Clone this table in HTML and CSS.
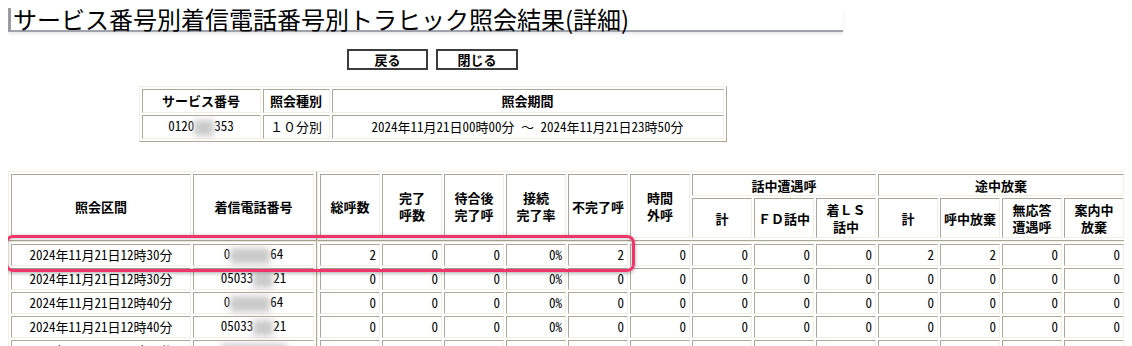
FILE: index.html
```html
<!DOCTYPE html>
<html lang="ja">
<head>
<meta charset="utf-8">
<title>サービス番号別着信電話番号別トラヒック照会結果(詳細)</title>
<link rel="stylesheet" href="styles.css">
</head>
<body>
<div class="page">
  <h1 class="title">サービス番号別着信電話番号別トラヒック照会結果(詳細)</h1>

  <div class="actions">
    <button class="btn btn-back" type="button">戻る</button>
    <button class="btn btn-close" type="button">閉じる</button>
  </div>

  <table class="grid summary">
    <tr class="summary-head">
      <th class="c-svc">サービス番号</th>
      <th class="c-kind">照会種別</th>
      <th class="c-period">照会期間</th>
    </tr>
    <tr class="summary-row">
      <td>0120<span class="mask mask-s"></span>353</td>
      <td>１０分別</td>
      <td>2024年11月21日00時00分&nbsp;～&nbsp;2024年11月21日23時50分</td>
    </tr>
  </table>

  <div class="report">
    <div class="report-part">
      <table class="grid fixed-head">
        <tr>
          <th class="c-range">照会区間</th>
          <th class="c-tel">着信電話番号</th>
        </tr>
      </table>
      <table class="grid stat-head">
        <tr class="r1">
          <th rowspan="2">総呼数</th>
          <th rowspan="2">完了<br>呼数</th>
          <th rowspan="2">待合後<br>完了呼</th>
          <th rowspan="2">接続<br>完了率</th>
          <th rowspan="2">不完了呼</th>
          <th rowspan="2">時間<br>外呼</th>
          <th class="grp" colspan="3">話中遭遇呼</th>
          <th class="grp" colspan="4">途中放棄</th>
          <th rowspan="2">応答<br>遅延呼</th>
        </tr>
        <tr class="r2">
          <th>計</th>
          <th>ＦＤ話中</th>
          <th>着ＬＳ<br>話中</th>
          <th>計</th>
          <th>呼中放棄</th>
          <th>無応答<br>遭遇呼</th>
          <th>案内中<br>放棄</th>
        </tr>
      </table>
    </div>

    <div class="report-part">
      <table class="grid fixed-body">
        <tr><td class="c-range">2024年11月21日12時30分</td><td class="c-tel">0<span class="mask mask-m"></span>64</td></tr>
        <tr><td class="c-range">2024年11月21日12時30分</td><td class="c-tel">05033<span class="mask mask-s"></span>21</td></tr>
        <tr><td class="c-range">2024年11月21日12時40分</td><td class="c-tel">0<span class="mask mask-m"></span>64</td></tr>
        <tr><td class="c-range">2024年11月21日12時40分</td><td class="c-tel">05033<span class="mask mask-s"></span>21</td></tr>
        <tr><td class="c-range">2024年11月21日12時50分</td><td class="c-tel"><span class="mask mask-l"></span></td></tr>
      </table>
      <table class="grid stat-body">
        <tr><td>2</td><td>0</td><td>0</td><td>0%</td><td>2</td><td>0</td><td>0</td><td>0</td><td>0</td><td>2</td><td>2</td><td>0</td><td>0</td><td>0</td></tr>
        <tr><td>0</td><td>0</td><td>0</td><td>0%</td><td>0</td><td>0</td><td>0</td><td>0</td><td>0</td><td>0</td><td>0</td><td>0</td><td>0</td><td>0</td></tr>
        <tr><td>0</td><td>0</td><td>0</td><td>0%</td><td>0</td><td>0</td><td>0</td><td>0</td><td>0</td><td>0</td><td>0</td><td>0</td><td>0</td><td>0</td></tr>
        <tr><td>0</td><td>0</td><td>0</td><td>0%</td><td>0</td><td>0</td><td>0</td><td>0</td><td>0</td><td>0</td><td>0</td><td>0</td><td>0</td><td>0</td></tr>
        <tr><td>0</td><td>0</td><td>0</td><td>0%</td><td>0</td><td>0</td><td>0</td><td>0</td><td>0</td><td>0</td><td>0</td><td>0</td><td>0</td><td>0</td></tr>
      </table>
    </div>

    <div class="callout"></div>
  </div>
</div>
</body>
</html>
```

FILE: styles.css
```css
html {
  overflow: hidden;
}

body {
  margin: 8px;
  background: #ffffff;
  color: #000000;
  font-family: "Noto Sans CJK JP", "Noto Sans", sans-serif;
  font-size: 13px;
}

.page {
  width: 849px;
}

/* page heading with left bar and underline */
.title {
  margin: 0;
  width: 835px;
  height: 24px;
  box-sizing: border-box;
  padding-left: 2px;
  border-left: 3px solid #9a9ba3;
  border-bottom: 2px solid #9fa2aa;
  box-shadow: 0 2px 3px rgba(120, 125, 135, 0.18);
  font-size: 24px;
  font-weight: normal;
  line-height: 22px;
  white-space: nowrap;
}

/* back / close buttons */
.actions {
  display: flex;
  justify-content: center;
  gap: 8px;
  margin-top: 17px;
}

.btn {
  height: 21px;
  padding: 0;
  background: #ffffff;
  border: 2px solid #3c3c3c;
  font-family: inherit;
  font-size: 13px;
  font-weight: bold;
  line-height: 15px;
  color: #000000;
}

.btn-back {
  width: 81px;
}

.btn-close {
  width: 82px;
}

/* classic bevelled table grid */
.grid {
  border-collapse: separate;
  border-spacing: 2px;
  border: 1px solid;
  border-color: #f1efe2 #aca899 #aca899 #f1efe2;
}

.grid th,
.grid td {
  box-sizing: border-box;
  border: 1px solid;
  border-color: #aca899 #f1efe2 #f1efe2 #aca899;
  padding: 0 3px;
  white-space: nowrap;
}

.grid th {
  font-weight: bold;
  text-align: center;
  line-height: 17px;
}

/* data cells use half-width digits */
.grid td {
  font-family: "Noto Sans Mono CJK JP", "Noto Sans CJK JP", monospace;
}

/* query summary */
.summary {
  margin: 16px auto 0;
}

.summary th,
.summary td {
  height: 24px;
  text-align: center;
  line-height: 16px;
}

.summary .c-svc {
  width: 119px;
}

.summary .c-kind {
  width: 67px;
}

.summary .c-period {
  width: 392px;
}

/* masked digits in phone numbers */
.mask {
  display: inline-block;
  vertical-align: middle;
  height: 16px;
  background: #cbcbcb;
  filter: blur(3px);
}

.mask-s {
  width: 20px;
}

.mask-m {
  width: 40px;
}

.mask-l {
  width: 66px;
}

/* detail report */
.report {
  position: relative;
  margin-top: 29px;
  width: max-content;
}

.report-part {
  display: flex;
  align-items: flex-start;
}

.fixed-head th {
  height: 64px;
}

.fixed-head .c-range,
.fixed-body .c-range {
  width: 180px;
}

.fixed-head .c-tel,
.fixed-body .c-tel {
  width: 121px;
}

.stat-head th {
  width: 60px;
}

.stat-head th.grp {
  width: auto;
}

.stat-head .r1 th {
  height: 22px;
}

.stat-head .r2 th {
  height: 40px;
}

.fixed-body td,
.stat-body td {
  height: 22px;
  line-height: 16px;
}

.fixed-body td {
  text-align: center;
}

.stat-body td {
  width: 60px;
  text-align: right;
  padding-right: 3px;
}

/* highlight drawn around the first result row */
.callout {
  position: absolute;
  left: -3px;
  top: 64px;
  width: 630px;
  height: 37px;
  box-sizing: border-box;
  border: 3.5px solid #f0346c;
  border-radius: 8px;
  box-shadow: 0 1px 4px rgba(0, 0, 0, 0.35), inset 0 1px 4px rgba(0, 0, 0, 0.22);
  pointer-events: none;
}
```
